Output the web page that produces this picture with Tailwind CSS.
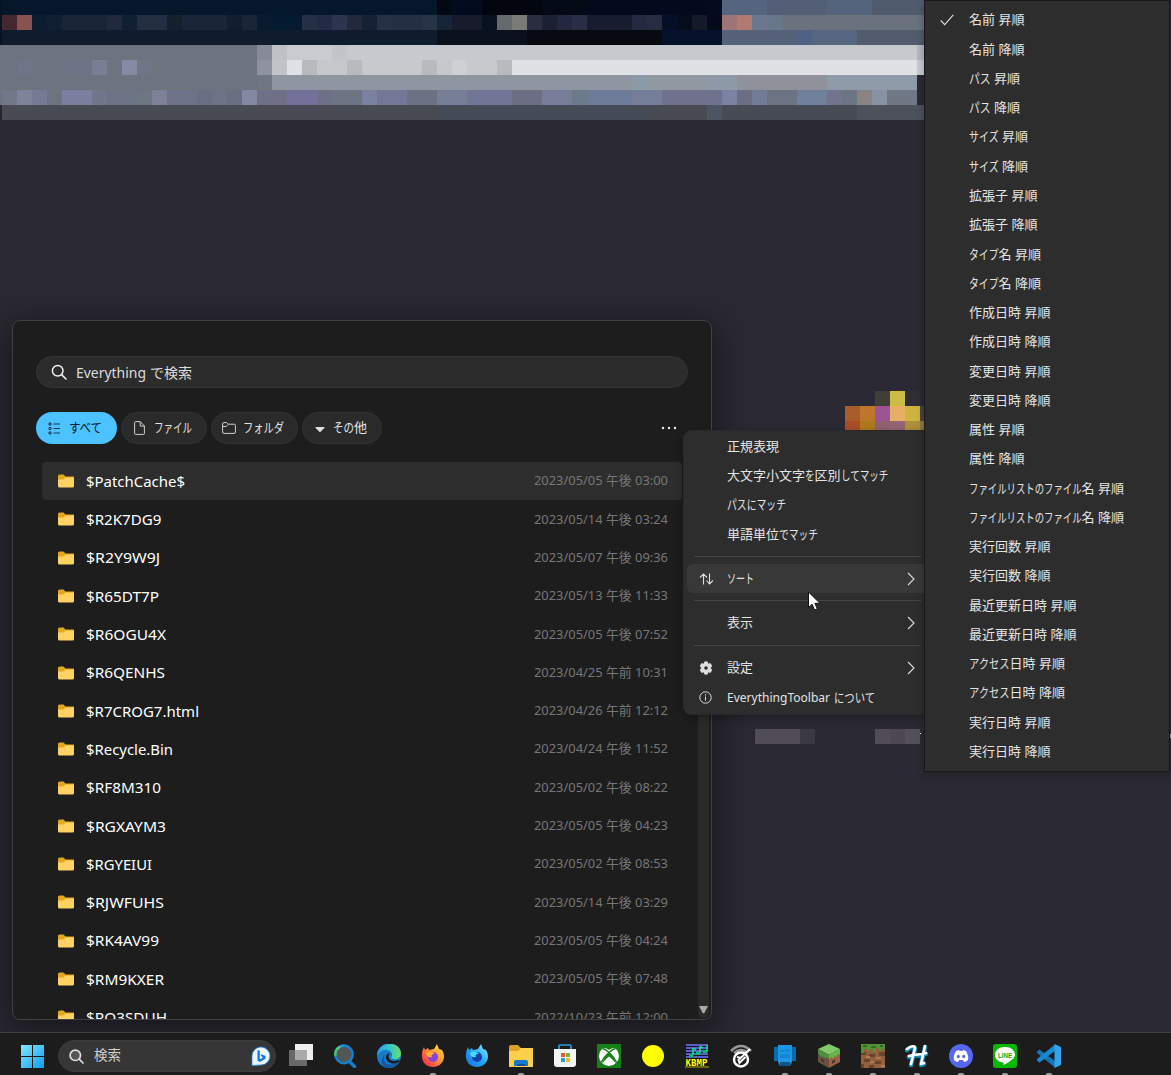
<!DOCTYPE html>
<html lang="ja">
<head>
<meta charset="utf-8">
<title>EverythingToolbar</title>
<script src="https://cdn.jsdelivr.net/npm/@tailwindcss/browser@4"></script>
</head>
<body class="relative flex h-[1075px] w-[1171px] flex-col overflow-hidden bg-[#2b2933] font-['Noto_Sans','Noto_Sans_CJK_JP',sans-serif] text-[13px] text-[#e4e4e4]">

<!-- blurred browser chrome behind the windows -->
<div id="mosaic" class="flex h-[120px] w-[925px] flex-col overflow-hidden"></div>

<!-- desktop mosaics -->
<div class="absolute left-[845px] top-[391px] grid w-[90px] grid-cols-[repeat(6,15px)] grid-rows-[repeat(3,15px)]">
  <i></i><i></i><i class="bg-[#413e36]"></i><i class="bg-[#cbbd43]"></i><i class="bg-[#302d34]"></i><i></i>
  <i class="bg-[#a95d2a]"></i><i class="bg-[#bd762a]"></i><i class="bg-[#9c5497]"></i><i class="bg-[#e7af65]"></i><i class="bg-[#cdb53d]"></i><i class="bg-[#4a4538]"></i>
  <i class="bg-[#a74e28]"></i><i class="bg-[#ae781d]"></i><i class="bg-[#916073]"></i><i class="bg-[#956474]"></i><i class="bg-[#ac913b]"></i><i class="bg-[#8d7b42]"></i>
</div>
<div class="absolute left-[755px] top-[729px] flex h-[15px]"><i class="w-[45px] bg-[#504d57]"></i><i class="w-[15px] bg-[#3b3941]"></i><i class="w-[60px]"></i><i class="w-[15px] bg-[#504d58]"></i><i class="w-[15px] bg-[#4b4851]"></i><i class="w-[15px] bg-[#53505a]"></i></div>
<i class="absolute left-[920px] top-[733px] h-px w-px bg-white"></i>
<i class="absolute left-[1170px] top-[734px] h-1 w-px bg-[#aaa]"></i>

<!-- search window -->
<main class="absolute left-3 top-[320px] flex h-[700px] w-[700px] flex-col overflow-hidden rounded-lg border border-[#414144] bg-[#1d1d1d] shadow-[0_8px_34px_6px_rgba(0,0,0,0.42)]">
  <div class="ml-[23px] mt-[35px] flex h-8 w-[652px] shrink-0 items-center rounded-full border border-[#353535] bg-[#2c2c2c] pl-[14px] text-sm text-[#dcdcdc]">
    <svg class="mr-[9px] h-4 w-4" viewBox="0 0 16 16" fill="none" stroke="#f4f4f4" stroke-width="1.5" stroke-linecap="round"><circle cx="6.7" cy="6.7" r="5.3"/><path d="m10.6 10.6 4.4 4.4"/></svg>
    <span class="fit pt-px" data-w="70">Everything</span><span class="fit ml-1 pt-px" data-w="42">で検索</span>
  </div>
  <div class="ml-[23px] mt-6 flex h-8 w-[652px] shrink-0 items-center">
    <div class="flex h-8 w-[81px] items-center rounded-full bg-[#4cc2ff] pl-3 text-[#08202c]">
      <svg class="mr-2 h-[13px] w-[13px]" viewBox="0 0 13 13" fill="none" stroke="#163a4d"><path d="M1 1h2v2H1zM1 5.5h2v2H1zM1 10h2v2H1zM5.5 2H12M5.5 6.5H12M5.5 11H12"/></svg>
      <span class="kfit" data-w="33">すべて</span>
    </div>
    <div class="ml-1 flex h-8 w-[86px] items-center rounded-full border border-[#333] bg-[#2a2a2a] pl-3">
      <svg class="mr-[9px] h-[14px] w-[11px]" viewBox="0 0 11 14" fill="none" stroke="#d0d0d0" stroke-linejoin="round"><path d="M1.7.6h4.5l4.2 4.3v7.6q0 .9-.9.9H1.6q-1 0-1-.9V1.6q0-1 1.1-1ZM6.2.8v4.3h4"/></svg>
      <span class="kfit" data-w="38">ファイル</span>
    </div>
    <div class="ml-1 flex h-8 w-[87px] items-center rounded-full border border-[#333] bg-[#2a2a2a] pl-[10px]">
      <svg class="mr-[7px] h-3 w-[14px]" viewBox="0 0 14 12" fill="none" stroke="#d0d0d0" stroke-linejoin="round"><path d="M.6 2q0-1.4 1.3-1.4h2.8L6.3 2.2h5.8q1.3 0 1.3 1.3V10q0 1.4-1.3 1.4H1.9Q.6 11.400.6 10ZM.7 4.500h3.600l2-2.200"/></svg>
      <span class="kfit" data-w="41">フォルダ</span>
    </div>
    <div class="ml-1 flex h-8 w-[80px] items-center rounded-full border border-[#333] bg-[#2a2a2a] pl-3">
      <svg class="mr-2 mt-[3px] h-[6px] w-[10px]" viewBox="0 0 10 6"><path d="M.8 0h8.400q.8.300.2 1L5.600 4.800q-.6.500-1.200 0L.6 1Q0 .3.800 0Z" fill="#ddd"/></svg>
      <span class="kfit" data-w="34">その他</span>
    </div>
    <svg class="ml-auto mr-[11px] h-1 w-4" viewBox="0 0 16 4" fill="#eee"><circle cx="2" cy="2" r="1.2"/><circle cx="8" cy="2" r="1.2"/><circle cx="14" cy="2" r="1.2"/></svg>
  </div>
  <div class="ml-[29px] mt-[18px] flex min-h-0 flex-1 overflow-hidden">
    <div id="files" class="w-[640px] shrink-0 overflow-hidden"></div>
    <div class="ml-4 mb-px flex w-[11px] items-end justify-center rounded-full bg-[#2a2a2a] pb-1">
      <svg class="h-2 w-[9px]" viewBox="0 0 9 8"><path d="M0 0h9L5.200 7.300H3.800Z" fill="#aaa"/></svg>
    </div>
  </div>
</main>

<!-- options menu -->
<nav class="absolute left-[683px] top-[430px] flex h-[285px] w-[242px] flex-col rounded-l-lg border border-[#292929] bg-[#2d2d2d] pt-px shadow-[0_3px_8px_rgba(0,0,0,0.3)]">
  <div class="flex h-[29.300px] items-center pl-[43px]"><span class="kfit" data-w="52">正規表現</span></div>
  <div class="flex h-[29.300px] items-center pl-[43px]"><span class="kfit" data-w="161">大文字小文字を区別してマッチ</span></div>
  <div class="flex h-[29.300px] items-center pl-[43px]"><span class="kfit" data-w="59">パスにマッチ</span></div>
  <div class="flex h-[29.300px] items-center pl-[43px]"><span class="kfit" data-w="91">単語単位でマッチ</span></div>
  <div class="ml-[10px] mt-[7px] h-px w-[227px] bg-[#464646]"></div>
  <div class="ml-[3px] mt-[7px] flex h-[29px] items-center rounded-l-md bg-[#383838] pl-3 pr-[9px]">
    <svg class="mr-[13px] h-3 w-[15px]" viewBox="0 0 15 12" fill="none" stroke="#ddd" stroke-width="1.100"><path d="M4.500 11.500V1M1 4.500 4.500 1 8 4.500M10.500.5V11M7.500 7.500l3 3.500L14 7.500"/></svg>
    <span class="kfit" data-w="27">ソート</span>
    <svg class="ml-auto h-[14px] w-2" viewBox="0 0 8 14" fill="none" stroke="#ddd" stroke-width="1.100"><path d="m1 1 6 6-6 6"/></svg>
  </div>
  <div class="ml-[10px] mt-[7px] h-px w-[227px] bg-[#464646]"></div>
  <div class="mt-[7px] flex h-[29px] items-center pl-[43px] pr-[9px]"><span class="kfit" data-w="26">表示</span>
    <svg class="ml-auto h-[14px] w-2" viewBox="0 0 8 14" fill="none" stroke="#ddd" stroke-width="1.100"><path d="m1 1 6 6-6 6"/></svg></div>
  <div class="ml-[10px] mt-[8px] h-px w-[227px] bg-[#464646]"></div>
  <div class="mt-[7px] flex h-[30px] items-center pl-[15px] pr-[9px]">
    <svg class="mr-[14px] h-[14px] w-[14px]" viewBox="0 0 14 14"><path fill="#ddd" fill-rule="evenodd" d="M5.200.7Q7 0 8.800.7l.4 2 2-.7q1.600 1.300 1.900 3.200L11.600 7l1.500 1.800q-.3 1.900-1.900 3.200l-2-.7-.4 2q-1.800.7-3.600 0l-.4-2-2 .7Q1.200 10.700.9 8.800L2.400 7 .9 5.200Q1.200 3.300 2.800 2l2 .7ZM7 5.200a1.800 1.800 0 1 0 0 3.600 1.800 1.800 0 0 0 0-3.600Z"/></svg>
    <span class="kfit" data-w="26">設定</span>
    <svg class="ml-auto h-[14px] w-2" viewBox="0 0 8 14" fill="none" stroke="#ddd" stroke-width="1.100"><path d="m1 1 6 6-6 6"/></svg>
  </div>
  <div class="flex h-[29px] items-center pl-[15px]">
    <svg class="mr-[15px] h-[13px] w-[13px]" viewBox="0 0 13 13" fill="none" stroke="#ddd"><circle cx="6.500" cy="6.500" r="5.700"/><path d="M6.500 5.500v4.200M6.500 3.200v1.300"/></svg>
    <span class="fit" data-w="103">EverythingToolbar</span><span class="kfit ml-[4px]" data-w="41">について</span>
  </div>
</nav>

<!-- sort submenu -->
<nav class="absolute left-[924px] top-0 h-[772px] w-[246px] border border-[#17171a] bg-[#2d2d2d] pt-[4.500px] shadow-[0_3px_8px_rgba(0,0,0,0.25)]">
  <div id="sorts"></div>
  <svg class="absolute left-[15px] top-[13px] h-3 w-[14px]" viewBox="0 0 14 12" fill="none" stroke="#ddd" stroke-width="1.100"><path d="m.7 6.500 4 4.200L13.300.8"/></svg>
</nav>

<svg class="absolute left-[807px] top-[591px] h-[20px] w-[14px]" viewBox="0 0 14 20"><path d="M1.500 1v15.500l3.600-3.300L7.500 19l2.800-1.200-2.400-5.500h5Z" fill="#fff" stroke="#111"/></svg>

<!-- taskbar -->
<footer class="absolute bottom-0 left-0 flex h-[43px] w-full items-center border-t border-[#414144] bg-[#1c1c1c] pb-0 pt-[4px]">
  <svg class="ml-5 h-6 w-6" viewBox="0 0 24 24"><defs><linearGradient id="win" x2="1" y2="1"><stop stop-color="#82e8ff"/><stop offset="1" stop-color="#0c9df4"/></linearGradient></defs><path fill="url(#win)" d="M1 1h11v11H1zM13 1h11v11H13zM1 13h11v11H1zM13 13h11v11H13z"/></svg>
  <div class="ml-[14px] flex h-8 w-[218px] items-center rounded-full border border-[#3c3c3c] bg-[#363636] pl-[10px] pr-[4px] text-[13.500px] text-[#cfcfcf]">
    <svg class="mr-[10px] h-[15px] w-[15px]" viewBox="0 0 15 15" stroke="#ddd" stroke-width="1.700" stroke-linecap="round"><circle cx="6.300" cy="6.300" r="5.200" fill="#555"/><path d="m10.200 10.200 3.800 3.800"/></svg>
    <span class="pb-[2px]">検索</span>
    <svg class="ml-auto h-5 w-5" viewBox="0 0 20 20"><path d="M1 19.500V10a9 9 0 1 1 9 9Z" fill="#edf6ff" stroke="#2688e8" stroke-width=".8"/><path d="m6.500 4 2.300.8v8.400l3.200-1.800-1.500-.8-1-2.500 5 1.900v2.800L8.800 16l-2.300-1.300Z" fill="#147bd8"/></svg>
  </div>
  <div class="ml-[3px] grid h-[38px] grid-cols-[repeat(18,44px)]">
    <div class="flex items-center justify-center"><svg class="h-6 w-6" viewBox="0 0 24 24"><path d="M6 0h18v16H6Z" fill="#eee"/><path d="M0 6h18v16H0Z" fill="#777" fill-opacity=".85"/><path d="M6 6h12v10H6Z" fill="#aaa"/></svg></div>
    <div class="flex items-center justify-center"><svg class="h-6 w-6" viewBox="0 0 24 24" fill="none"><defs><linearGradient id="mag" x1="0" y1="1" x2="1" y2="0"><stop stop-color="#48b75b"/><stop offset=".5" stop-color="#55d18b"/><stop offset=".8" stop-color="#167fcf"/></linearGradient></defs><path d="m16 17 5.500 5.500" stroke="#147fd0" stroke-width="3.200" stroke-linecap="round"/><circle cx="11" cy="10.500" r="8.700" fill="#555" stroke="#167fcf" stroke-width="2.500"/><path d="M17 4A8.700 8.700 0 0 0 2.500 12" stroke="url(#mag)" stroke-width="2.500"/></svg></div>
    <div class="flex items-center justify-center"><svg class="h-6 w-6" viewBox="0 0 24 24"><defs><linearGradient id="edge"><stop stop-color="#239de0"/><stop offset=".55" stop-color="#37c7ce"/><stop offset="1" stop-color="#67dc60"/></linearGradient></defs><circle cx="12" cy="12" r="12" fill="#147dc7"/><path d="M0 12C0-4 24-4 24 9.500c0 5-5 7-9 5-2-1 .5-1.500 0-4.500C14 5 4 4 0 12Z" fill="url(#edge)"/><path d="M8 11c-4 8 5 13 14 7-4 6-10 7-14 5C3 20 4 13 8 11Z" fill="#1358a6"/><path d="M12.500 9c-3 6 2 10 9.500 7l1 1c-6 5-14 2-14-4 0-2 1.500-3.500 3.500-4Z" fill="#1c1c1c"/></svg></div>
    <div class="relative flex items-center justify-center"><svg class="h-6 w-6" viewBox="0 0 24 24"><defs><linearGradient id="ff" x1="1" x2="0" y2="1"><stop stop-color="#ffe34d"/><stop offset=".45" stop-color="#ff9929"/><stop offset=".8" stop-color="#fa4050"/><stop offset="1" stop-color="#e52b74"/></linearGradient></defs><path d="m3 3 1 3 3-2 1 2 5-1 3-5 2 5 3 1c5 8 0 17-9 17C2 23-2 13 3 3Z" fill="url(#ff)"/><circle cx="12" cy="13" r="5" fill="#8a43d8"/><path d="M5 9c4-3 7-1 9 1-3-.5-4 1-3 3-3 1-6-1-6-4Z" fill="#ffac2b"/></svg><i class="absolute -bottom-px h-[3px] w-[6px] rounded-full bg-[#999]"></i></div>
    <div class="flex items-center justify-center"><svg class="h-6 w-6" viewBox="0 0 24 24"><defs><linearGradient id="fd" x1="1" x2="0" y2="1"><stop stop-color="#8ceeff"/><stop offset=".5" stop-color="#23a7f2"/><stop offset="1" stop-color="#126de9"/></linearGradient></defs><path d="m3 3 1 3 3-2 1 2 5-1 3-5 2 5 3 1c5 8 0 17-9 17C2 23-2 13 3 3Z" fill="url(#fd)"/><circle cx="12" cy="13" r="5" fill="#1640a5"/><path d="M5 9c4-3 7-1 9 1-3-.5-4 1-3 3-3 1-6-1-6-4Z" fill="#48d7ff"/></svg></div>
    <div class="relative flex items-center justify-center"><svg class="h-6 w-6" viewBox="0 0 24 24"><path d="M0 3q0-2 2-2h7l3 3h12v19H0Z" fill="#dda022"/><path d="M0 7h9l3-3h12v19H0Z" fill="#ffce4c"/><path d="M5 22v-4q0-2 2-2h10q2 0 2 2v4Z" fill="#157bcc"/><path d="M8 20h8v2H8Z" fill="#0b5596"/></svg><i class="absolute -bottom-px h-[3px] w-[6px] rounded-full bg-[#999]"></i></div>
    <div class="flex items-center justify-center"><svg class="h-6 w-6" viewBox="0 0 24 24"><path d="M6 6V2q0-1 1-1h10q1 0 1 1v4" fill="none" stroke="#249dd8" stroke-width="1.700"/><path d="M1 5h22v15q0 3-3 3H4q-3 0-3-3Z" fill="#f4f4f4"/><path d="M8 9h4v4H8Z" fill="#ef5532"/><path d="M13 9h4v4h-4Z" fill="#77b72b"/><path d="M8 14h4v4H8Z" fill="#26a1df"/><path d="M13 14h4v4h-4Z" fill="#f8b920"/></svg></div>
    <div class="flex items-center justify-center"><svg class="h-6 w-6" viewBox="0 0 24 24"><path d="M0 0h24v24H0z" fill="#148016"/><circle cx="12" cy="12" r="10" fill="#fff"/><path d="M5 20C6 15 9 11 12 8.500c3 2.500 6 6.500 7 11.500-2-3-4.500-5.500-7-7.500-2.500 2-5 4.500-7 7.500ZM5 4c3-1 5 .8 7 1.800 2-1 4-2.800 7-1.800-3-3-11-3-14 0Z" fill="#148016"/><path d="M5.500 4.500c3 .5 5 2.500 6.500 4-3 2.500-6 6-7.500 10M18.500 4.500c-3 .5-5 2.500-6.500 4 3 2.500 6 6 7.500 10" fill="none" stroke="#148016" stroke-width="1.300"/></svg></div>
    <div class="flex items-center justify-center"><i class="h-[22px] w-[22px] rounded-full bg-[#ffff00]"></i></div>
    <div class="flex items-center justify-center"><svg class="h-6 w-6" viewBox="0 0 24 24"><path d="M1 0h22v14H1z" fill="#10152f"/><path d="M1 1h22M1 4h22M1 7h22M1 10h22M1 13h22" stroke="#7778ef" stroke-width="1.300"/><path d="M8 4v7M15 2v7M22 1v6M8 4l3 2M15 2l3 2" stroke="#00e8a0" stroke-width="1.500"/><path d="M4 10h4v3H4zM11 8h4v3h-4zM18 6h4v3h-4z" fill="#00bd75"/><path d="M0 14h24v10H0Z" fill="#15150b"/><text x="0.500" y="22" textLength="22" lengthAdjust="spacingAndGlyphs" font-family="Liberation Mono" font-weight="bold" font-size="11" fill="#ff0">KBMP</text><path d="M0 23h24" stroke="#bbb900"/></svg></div>
    <div class="flex items-center justify-center"><svg class="h-6 w-6" viewBox="0 0 24 24" fill="none"><path d="M2 7Q12-3 22 7M5 9q7-6 14 0" stroke="#999" stroke-width="2.500"/><circle cx="12" cy="15.500" r="7" stroke="#fff" stroke-width="2.500"/><path d="M21 5 9.500 16l1 3 6-6M8 13l4 1" stroke="#fff" stroke-width="2"/></svg></div>
    <div class="relative flex items-center justify-center"><svg class="h-6 w-6" viewBox="0 0 24 24"><path d="M1 3h22v14H1z" fill="#086dad"/><path d="M5 1h14v17l-2 4H7l-2-4Z" fill="#1d97e3"/><path d="M7 6h4v2H7zM12 5h5v3h-5zM7 10h10v4H7z" fill="#1487d4"/><path d="M7 18h10v4H7z" fill="#0b558b"/></svg><i class="absolute -bottom-px h-[3px] w-[6px] rounded-full bg-[#999]"></i></div>
    <div class="relative flex items-center justify-center"><svg class="h-6 w-6" viewBox="0 0 24 24"><path d="m12 0 11 5-11 6L1 5Z" fill="#82c96a"/><path d="m1 5 11 6v13L1 18Z" fill="#6d5140"/><path d="m23 5-11 6v13l11-6Z" fill="#9a6043"/><path d="m1 5 11 6v4l-3-2v2l-3-3v2l-2-3v2L1 9Z" fill="#4c913e"/><path d="m12 11 11-6v5l-3 1v2l-3-1v3l-3-2-2 3Z" fill="#67b64a"/><path d="m4 14 3 2v3l-3-2ZM15 17l3-2v3l-3 2Z" fill="#49372f"/></svg><i class="absolute -bottom-px h-[3px] w-[6px] rounded-full bg-[#999]"></i></div>
    <div class="relative flex items-center justify-center"><svg class="h-6 w-6" viewBox="0 0 24 24"><path d="M0 0h24v24H0z" fill="#91603f"/><path d="M0 8h5v3H0zM8 10h6v3H8zM18 8h6v4h-6zM3 15h6v3H3zM14 17h6v3h-6zM8 21h5v3H8zM0 20h3v4H0z" fill="#68442f"/><path d="M5 12h4v2H5zM15 13h5v2h-5zM9 17h4v2H9zM20 21h4v2h-4z" fill="#b37b50"/><path d="M0 0h24v5h-3v2h-3V4h-3v4h-3V5H9v2H6V5H3v4H0Z" fill="#519436"/><path d="M2 1h4v2H2zM10 2h5v2h-5zM19 1h3v2h-3z" fill="#356a25"/></svg><i class="absolute -bottom-px h-[3px] w-[6px] rounded-full bg-[#999]"></i></div>
    <div class="relative flex items-center justify-center"><svg class="h-6 w-6" viewBox="0 0 24 24" fill="none" stroke-linecap="round" stroke-linejoin="round"><path d="M2 6c5-4 8-3 8-1L6 21M20 3l-4 18 3-1M4 13c6-2 12-1 17-3" stroke="#118bb3" stroke-width="4.500"/><path d="M2 5c5-4 8-3 8-1L6 20M20 2l-4 18 3-1M4 12c6-2 12-1 17-3" stroke="#fff" stroke-width="2.700"/></svg><i class="absolute -bottom-px h-[3px] w-[6px] rounded-full bg-[#999]"></i></div>
    <div class="relative flex items-center justify-center"><svg class="h-6 w-6" viewBox="0 0 24 24"><circle cx="12" cy="12" r="12" fill="#5865f2"/><path d="m7 7 3-1 .7 1h2.600l.7-1 3 1q3 5 2 9-2 2-4 2l-1-2h-4l-1 2q-2 0-4-2-1-4 2-9Z" fill="#fff"/><ellipse cx="9.300" cy="12.500" rx="1.500" ry="1.700" fill="#5865f2"/><ellipse cx="14.700" cy="12.500" rx="1.500" ry="1.700" fill="#5865f2"/></svg><i class="absolute -bottom-px h-[3px] w-[6px] rounded-full bg-[#999]"></i></div>
    <div class="relative flex items-center justify-center"><svg class="h-6 w-6" viewBox="0 0 24 24"><rect width="24" height="24" rx="3" fill="#06b900"/><path d="M12 3c-6 0-10 3.500-10 8 0 4 3.500 7 8 7.600.5.200 1 .5.500 2.400 4-2 11-6 11.500-10C22 6.500 18 3 12 3Z" fill="#fff"/><text x="5" y="13.500" textLength="14" lengthAdjust="spacingAndGlyphs" font-family="Liberation Sans" font-weight="bold" font-size="6.500" fill="#06a900">LINE</text></svg><i class="absolute -bottom-px h-[3px] w-[6px] rounded-full bg-[#999]"></i></div>
    <div class="relative flex items-center justify-center"><svg class="h-6 w-6" viewBox="0 0 24 24"><path d="M0 7.500 2.500 5.500 18 17v6.500L0 9Z" fill="#1177b5"/><path d="M0 16.500 2.500 18.500 18 7V.5L0 15Z" fill="#168bd1"/><path d="m17.500 0 6.500 3v18l-6.500 3Z" fill="#33a5ed"/></svg><i class="absolute -bottom-px h-[3px] w-[6px] rounded-full bg-[#999]"></i></div>
  </div>
</footer>

<script>
// Each row starts with a 2px sliver and continues in 15px cells: "colour count".
const rows = [
 "05172a 29,030815 1,030b1e 2,03050f 4,030a16 3,030a1e 8,030b1c 1,56657f 3,535f75 4,54647d 3,505b6e 5",
 "43292f 1,88524f 1,0c1d2f 1,101f32 1,1a2638 3,1f2a3d 1,101f32 1,232e41 2,15202f 1,1a2538 3,101e30 1,1a2638 1,081a2e 1,031a30 2,253046 1,232b42 1,2d3450 1,22293c 1,152234 1,263146 1,232f42 2,273347 1,152436 1,161a2a 2,06121f 1,646a6c 1,7a7b76 1,2a2c40 1,1b2033 1,232840 1,292e46 1,171c2f 3,222941 1,272c43 1,050f28 1,050c1a 1,151a2b 1,030a1b 1,9c7676 1,b07a70 1,6c7790 1,68778a 1,6a727e 10",
 "0e1c2d 29,0a101c 6,080a12 9,06122b 4,56617a 5,4f6184 1,566681 3,525c6d 6",
 "6d7480 17,858b97 1,c0c1c6 1,cacbd0 3,c3c4c9 1,c8c9ce 38,b3b8c1 1",
 "6d7480 1,70768a 1,6c7480 2,6d7485 2,7a7e95 1,6e7482 1,868aa5 1,707686 1,6d7480 7,8e949f 1,c2c3c8 1,dfe1e6 1,b8babd 1,c6c7ca 2,b8babd 1,c8c9cc 4,b8babe 1,c7c8cb 1,cfd0d3 1,c8c9cc 2,b8babe 1,dfe1e4 27,c8cbd1 1",
 "6d7480 17,707783 1,9096a1 24,8b9aa7 1,9098a2 4,8e9aa7 2,8f929b 6,8f9ba8 6",
 "72788a 1,7d8399 1,767a92 1,6c7480 1,7b80a0 2,72768a 1,6c7385 2,6d7683 1,7d8298 1,6e7288 2,686f82 1,6e7286 1,686f80 1,8388a3 1,6f7088 2,73709a 2,6f7088 1,6d7483 2,7b81a0 1,747795 2,6d7184 2,757e96 2,717697 3,6c6f83 2,777d99 2,6c7a8c 1,6d7b98 3,747e98 2,70728d 4,7b83a2 1,6c6d83 1,727c96 1,6c7484 2,71809a 2,74738d 1,6d7484 1,898484 1,8892a5 1,707785 2",
 "484a54 29,454b57 14,484a54 4,4d5463 1,474b55 9,4c515c 5"
];
mosaic.innerHTML = rows.map((r, i) => {
  const runs = r.split(',').map(s => s.split(' '));
  const edge = i < 3 ? '071522' : i < 7 ? '6d7480' : '29252d';
  return `<div class="flex h-[15px] shrink-0"><i class="w-[2px] shrink-0" style="background:#${edge}"></i>` +
    runs.map(([c, n]) => `<i class="shrink-0" style="width:${n * 15}px;background:#${c}"></i>`).join('') + '</div>';
}).join('');

const entries = [
 ['$PatchCache$',99,'2023/05/05 午後 03:00'],['$R2K7DG9',75.5,'2023/05/14 午後 03:24'],['$R2Y9W9J',74,'2023/05/07 午後 09:36'],
 ['$R65DT7P',73,'2023/05/13 午後 11:33'],['$R6OGU4X',80,'2023/05/05 午後 07:52'],['$R6QENHS',79,'2023/04/25 午前 10:31'],
 ['$R7CROG7.html',113,'2023/04/26 午前 12:12'],['$Recycle.Bin',87,'2023/04/24 午後 11:52'],['$RF8M310',75,'2023/05/02 午後 08:22'],
 ['$RGXAYM3',80,'2023/05/05 午後 04:23'],['$RGYEIUI',66,'2023/05/02 午後 08:53'],['$RJWFUHS',78,'2023/05/14 午後 03:29'],
 ['$RK4AV99',73,'2023/05/05 午後 04:24'],['$RM9KXER',78,'2023/05/05 午後 07:48'],['$RQ3SDUH',81,'2022/10/23 午前 12:00']];
files.innerHTML = entries.map(([n, w, d], i) => `<div class="flex h-[38.300px] items-center rounded-sm pl-4 pr-[14px] ${i ? '' : 'bg-[#2d2d2d]'}">
  <svg class="mr-3 h-[14px] w-4 shrink-0" viewBox="0 0 16 14"><path d="M0 2Q0 .5 1.500.5h4L7.500 2.500H16V6H0Z" fill="#e5a51d"/><path d="M0 5.500h5.500l2-2H15q1 0 1 1V12q0 1.500-1.500 1.500h-13Q0 13.500 0 12Z" fill="#ffd263"/></svg>
  <span class="fit text-[15px] text-white" data-w="${w}">${n}</span><span class="fit ml-auto text-[#777]" data-w="134">${d}</span></div>`).join('');

const keys = [['名前',56],['パス',51],['サイズ',59],['拡張子',69],['タイプ名',72],['作成日時',82],['変更日時',82],['属性',56],['ファイルリストのファイル名',155],['実行回数',82],['最近更新日時',108],['アクセス日時',96],['実行日時',82]];
sorts.innerHTML = keys.flatMap(([k, w]) => ['昇順','降順'].map(o => `<div class="flex h-[29.280px] items-center pl-11"><span class="kfit" data-w="${w}">${k} ${o}</span></div>`)).join('');

// UI kana are narrower than kanji: condense only the kana so each label has its own width.
const fits = [...document.querySelectorAll('.fit')];
const kfits = [...document.querySelectorAll('.kfit')];
fits.forEach(el => el.classList.add('inline-block', 'origin-left', 'whitespace-nowrap', 'shrink-0'));
kfits.forEach(el => {
  el.classList.add('whitespace-pre', 'shrink-0');
  el.innerHTML = el.textContent.replace(/[\u3040-\u30ff]+/g, m => `<b class="inline-block origin-left whitespace-nowrap font-normal">${m}</b>`);
});
function squeeze(el, natural, width) {
  el.style.width = width + 'px';
  el.style.transform = `scaleX(${width / natural})`;
}
function fitAll() {
  const width = el => el.getBoundingClientRect().width;
  const reset = el => { el.style.width = ''; el.style.transform = ''; };
  fits.forEach(el => { reset(el); squeeze(el, width(el), +el.dataset.w); });
  kfits.forEach(el => {
    const kana = [...el.querySelectorAll('b')];
    if (!kana.length) return;
    kana.forEach(reset);
    const total = width(el), sizes = kana.map(width);
    const sum = sizes.reduce((a, b) => a + b, 0);
    const ratio = (el.dataset.w - total + sum) / sum;
    kana.forEach((k, i) => squeeze(k, sizes[i], sizes[i] * ratio));
  });
}
fitAll();
addEventListener('load', fitAll);
document.fonts.ready.then(fitAll);
document.fonts.addEventListener('loadingdone', fitAll);
new ResizeObserver(fitAll).observe(document.body);
</script>
</body>
</html>
